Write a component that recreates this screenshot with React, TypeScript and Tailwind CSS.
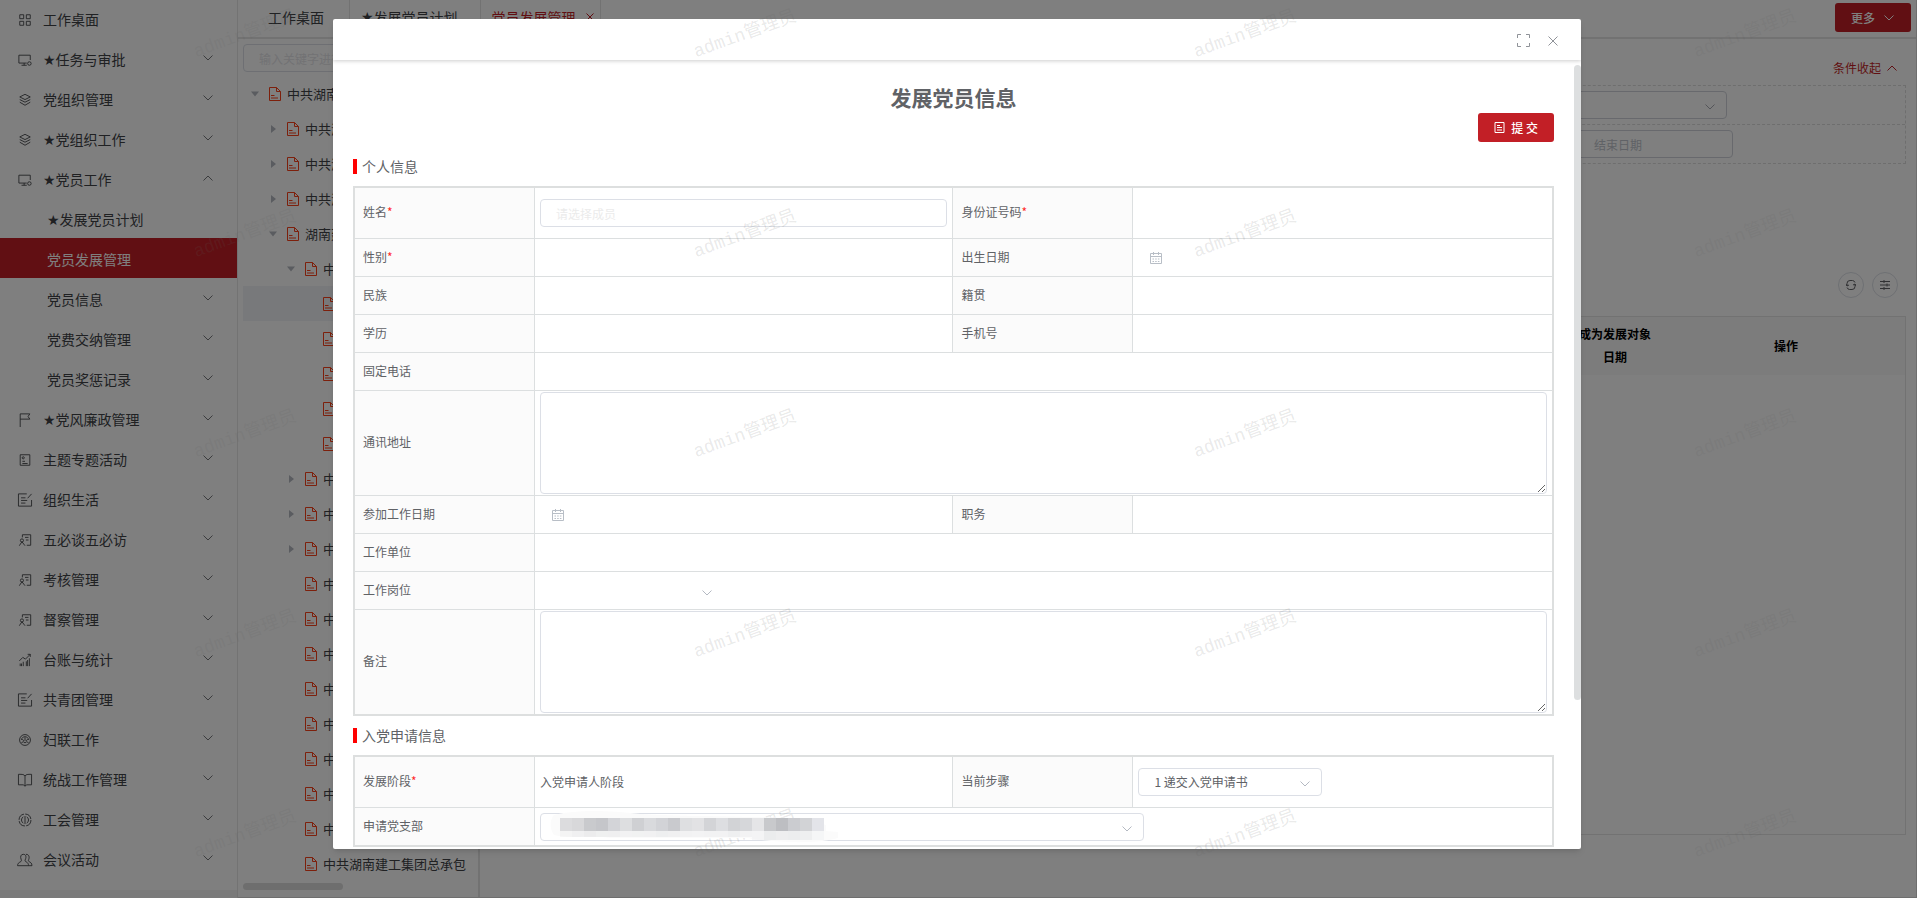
import { useState, type ReactNode } from 'react'
import clsx from 'clsx'

type IconName =
  | 'grid'
  | 'monitor'
  | 'layers'
  | 'flag'
  | 'profile'
  | 'edit'
  | 'person'
  | 'chart'
  | 'face'
  | 'book'
  | 'union'
  | 'users'

interface MenuItem {
  label: string
  icon?: IconName
  star?: boolean
  arrow?: 'up' | 'down'
  active?: boolean
}

interface TreeRow {
  label: string
  level: number
  arrow?: 'open' | 'closed'
  current?: boolean
}

const menu: MenuItem[] = [
  { label: '工作桌面', icon: 'grid' },
  { label: '任务与审批', star: true, icon: 'monitor', arrow: 'down' },
  { label: '党组织管理', icon: 'layers', arrow: 'down' },
  { label: '党组织工作', star: true, icon: 'layers', arrow: 'down' },
  { label: '党员工作', star: true, icon: 'monitor', arrow: 'up' },
  { label: '发展党员计划', star: true },
  { label: '党员发展管理', active: true },
  { label: '党员信息', arrow: 'down' },
  { label: '党费交纳管理', arrow: 'down' },
  { label: '党员奖惩记录', arrow: 'down' },
  { label: '党风廉政管理', star: true, icon: 'flag', arrow: 'down' },
  { label: '主题专题活动', icon: 'profile', arrow: 'down' },
  { label: '组织生活', icon: 'edit', arrow: 'down' },
  { label: '五必谈五必访', icon: 'person', arrow: 'down' },
  { label: '考核管理', icon: 'person', arrow: 'down' },
  { label: '督察管理', icon: 'person', arrow: 'down' },
  { label: '台账与统计', icon: 'chart', arrow: 'down' },
  { label: '共青团管理', icon: 'edit', arrow: 'down' },
  { label: '妇联工作', icon: 'face', arrow: 'down' },
  { label: '统战工作管理', icon: 'book', arrow: 'down' },
  { label: '工会管理', icon: 'union', arrow: 'down' },
  { label: '会议活动', icon: 'users', arrow: 'down' },
]

const tree: TreeRow[] = [
  { label: '中共湖南', level: 0, arrow: 'open' },
  { label: '中共湖', level: 1, arrow: 'closed' },
  { label: '中共湖', level: 1, arrow: 'closed' },
  { label: '中共湖', level: 1, arrow: 'closed' },
  { label: '湖南建', level: 1, arrow: 'open' },
  { label: '中共', level: 2, arrow: 'open' },
  { label: '', level: 3, current: true },
  ...Array.from({ length: 4 }, () => ({ label: '', level: 3 })),
  ...Array.from({ length: 3 }, () => ({ label: '中共', level: 2, arrow: 'closed' as const })),
  ...Array.from({ length: 8 }, () => ({ label: '中共', level: 2 })),
  { label: '中共湖南建工集团总承包', level: 2 },
]

const treeIndent = ['pl-[8px]', 'pl-[26px]', 'pl-[44px]', 'pl-[62px]']

const iconPaths: Record<IconName, ReactNode> = {
  grid: (
    <path d="M2 2h4.5v4.5H2zM9.5 2H14v4.5H9.5zM2 9.5h4.5V14H2zM9.5 9.5H14V14H9.5z" />
  ),
  monitor: (
    <>
      <path d="M10 11.500H1v-9h13V8M7 11.500V14M4 14h6" />
      <circle cx="13" cy="12" r="2" />
    </>
  ),
  layers: <path d="M8 1.500l6 3-6 3-6-3zM2 7.500l6 3 6-3M2 10.500l6 3.500 6-3.500" />,
  flag: <path d="M2.500 16V1h11l-2 3 2 3h-11" />,
  profile: (
    <>
      <path d="M2.500 2h11v12h-11zM5 9.500h3M5 12h6" />
      <circle cx="6" cy="5.500" r="1.200" />
    </>
  ),
  edit: <path d="M10 1H.5v14h15V8M15.500 1l-4.500 5M3.500 5.500h5M3.500 8.500h7M3.500 11.500h5" />,
  person: (
    <>
      <path d="M5 5V2h9.500v12H10M8 5h4M9 8h3M1.500 14.500l3-4.500 3.500 4.500" />
      <circle cx="4.500" cy="8.500" r="1.800" />
    </>
  ),
  chart: <path d="M2.500 15v-3M6 15v-5M9.500 15V9.500M13 15V6M4 15v-3M11 15V8M1.500 9l4-4 3 2L14 1.500M11 1.500h3v3" />,
  face: (
    <>
      <circle cx="8" cy="8" r="6.200" />
      <path d="M4 8c0-5 8-5 8 0M5 7l1.500 2M11 7L9.500 9M4 11.500c1-2 3-2 4 0 1-2 3-2 4 0M8 5v4" />
    </>
  ),
  book: <path d="M8 3.500C7 1.500 5 1.500.5 1.500v12h5.500l2 1.500 2-1.500h5.500v-12c-4.500 0-6.500 0-7.500 2V15" />,
  union: (
    <>
      <circle cx="8" cy="8" r="6.800" strokeDasharray="9 1.500" />
      <path d="M8 3.500v9M6 4.500a4 4 0 0 0 0 7M10 4.500a4 4 0 0 1 0 7" />
    </>
  ),
  users: (
    <path d="M6 1.500c-3 0-3.500 3-2.500 5.500.8 2 .5 2.500-1 3.200C1 11 -.5 12 -.5 14.500h12.500M6 1.500c3.500 0 3.500 3.500 2.500 5.500-.8 2-.5 2.500 1 3.200 1.500.8 2.500 2 2.500 4.300h4c0-3-2-4-3-4.500s-1.500-1-.8-2.500c1-2.500.8-6-3.200-6" />
  ),
}

function MenuIcon({ name }: { name: IconName }) {
  return (
    <svg viewBox="0 0 16 16" className="mt-0.5 h-[14px] w-[14px] shrink-0 overflow-visible" fill="none" stroke="currentColor">
      {iconPaths[name]}
    </svg>
  )
}

function Star() {
  return <span className="font-['DejaVu_Sans'] leading-none">★</span>
}

function Chevron({ up, className }: { up?: boolean; className?: string }) {
  return (
    <svg viewBox="0 0 10 6" className={clsx('h-[6px] w-[10px] shrink-0', className)} fill="none" stroke="currentColor">
      <path d={up ? 'M.5 5.500L5 1l4.500 4.500' : 'M.5.5L5 5 9.500.5'} />
    </svg>
  )
}

function CalendarIcon({ className }: { className?: string }) {
  return (
    <svg viewBox="0 0 12 12" className={clsx('h-[12px] w-[12px]', className)} fill="none" stroke="currentColor">
      <path d="M.5 1.500h11v10H.5zM.5 4.500h11M3.500 0v3M8.500 0v3" />
      <path d="M2.500 7h7M2.500 9.500h7" strokeDasharray="1.500 1.200" />
    </svg>
  )
}

function DocIcon() {
  return (
    <svg viewBox="0 0 12 14" className="h-[14px] w-[12px] shrink-0 text-[#fa4018]" fill="none" stroke="currentColor">
      <path d="M7.500.5H.5v13h11v-9l-4-4v4h4M2 8.500h3.500M2 11h7" />
    </svg>
  )
}

function Sidebar() {
  return (
    <aside className="w-[238px] shrink-0 border-r border-[#e6e6e6] bg-[#f5f5f5]">
      <nav className="-mt-0.5 bg-white pb-3">
        {menu.map((item) => (
          <a
            key={item.label}
            href="#"
            className={clsx(
              'flex h-10 items-center pt-0.5 pr-6 text-sm',
              item.icon ? 'gap-[11px] pl-[18px]' : 'pl-[47px]',
              item.active ? 'bg-[#c21f26] text-white' : 'text-[#404246]'
            )}
          >
            {item.icon && <MenuIcon name={item.icon} />}
            <span className="flex-1">
              {item.star && <Star />}
              {item.label}
            </span>
            {item.arrow && <Chevron up={item.arrow === 'up'} className="-mt-0.5 text-[#77797d]" />}
          </a>
        ))}
      </nav>
    </aside>
  )
}

function TabBar() {
  return (
    <header className="flex h-[39px] shrink-0 items-center justify-between border-b-2 border-[#e4e4e4] pr-[5px] text-sm text-[#404246]">
      <div className="flex h-full">
        <a href="#" className="flex items-center border-r border-[#e4e4e4] pr-[25px] pb-[3px] pl-[30px]">工作桌面</a>
        <a href="#" className="flex items-center border-r border-[#e4e4e4] pr-[22px] pb-[3px] pl-[11px]">
          <Star />
          发展党员计划
        </a>
        <a href="#" className="flex items-center gap-2.5 border-r border-[#e4e4e4] pr-1.5 pb-[3px] pl-[11px] text-[#c21f26]">
          党员发展管理
          <svg viewBox="0 0 8 8" className="h-2 w-2" stroke="currentColor"><path d="M.5.5l7 7M7.500.5l-7 7" /></svg>
        </a>
      </div>
      <button className="mb-0.5 flex h-[29px] items-center gap-[9px] rounded-[3px] bg-[#c21f26] pr-[17px] pl-4 text-xs font-medium text-white">
        更多
        <Chevron />
      </button>
    </header>
  )
}

function OrgTree() {
  return (
    <section className="flex w-[242px] shrink-0 flex-col border-r-2 border-[#e4e4e4] px-[5px] pt-[5px]">
      <input
        aria-label="关键字"
        placeholder="输入关键字进行过滤"
        className="h-7 w-full shrink-0 rounded border border-[#dcdfe6] px-[15px] text-xs placeholder:text-[#e4e4e8]"
      />
      <ul className="mt-1 mb-0.5">
        {tree.map((row, index) => (
          <li
            key={index}
            className={clsx(
              'flex h-[35px] items-center text-[13px] whitespace-nowrap text-[#404246]',
              treeIndent[row.level],
              row.current && 'bg-[#f0f3f6]'
            )}
          >
            <svg viewBox="0 0 8 8" className="mr-2.5 h-2 w-2 shrink-0 text-[#b4b8c0]" fill="currentColor">
              {row.arrow === 'open' && <path d="M0 1.500h8L4 6.500z" />}
              {row.arrow === 'closed' && <path d="M2 0v8l5-4z" />}
            </svg>
            <DocIcon />
            <span className="pl-1.5">{row.label}</span>
          </li>
        ))}
      </ul>
      <div className="h-[7px] w-[100px] rounded-full bg-[#dcdcdc]" />
    </section>
  )
}

function FilterAndTable() {
  return (
    <section className="flex min-w-0 flex-1 flex-col pr-[10px] pl-3">
      <div className="flex h-[46px] items-center justify-end pt-[11px] pr-[9px] text-xs text-[#c21f26]">
        <button className="flex items-center gap-1.5">
          条件收起
          <Chevron up />
        </button>
      </div>
      <form className="border border-dashed border-[#dcdcdc]">
        <div className="flex h-[39px] items-center justify-end border-b border-dashed border-[#dcdcdc] pr-[178px]">
          <div className="relative w-60">
            <select aria-label="发展阶段筛选" className="block h-7 w-full appearance-none rounded border border-[#d0d3da] text-xs" />
            <Chevron className="pointer-events-none absolute top-[13px] right-3 text-[#a8abb2]" />
          </div>
        </div>
        <div className="flex h-[38px] items-center justify-end pr-[172px]">
          <input
            aria-label="结束日期"
            placeholder="结束日期"
            className="h-7 w-[340px] rounded border border-[#d0d3da] pl-[200px] text-xs placeholder:text-[#c0c4cc]"
          />
        </div>
      </form>
      <div className="flex h-[152px] items-end justify-end gap-2 pr-2 pb-[18px]">
        <button aria-label="刷新" className="flex h-[26px] w-[26px] items-center justify-center rounded-full border border-[#dcdfe6] text-[#606266]">
          <svg viewBox="0 0 10 10" className="h-2.5 w-2.5" fill="none" stroke="currentColor">
            <path d="M1 6V3.500a3 3 0 0 1 3-3h2.500a3 3 0 0 1 2.500 2M9 4v2.500a3 3 0 0 1-3 3H3.500A3 3 0 0 1 1 7.500M0 4l1 2 2-1M10 6L9 4 7 5" />
          </svg>
        </button>
        <button aria-label="列设置" className="flex h-[26px] w-[26px] items-center justify-center rounded-full border border-[#dcdfe6] text-[#606266]">
          <svg viewBox="0 0 10 10" className="h-2.5 w-2.5" fill="none" stroke="currentColor">
            <path d="M0 1.500h10M0 5h10M0 8.500h10M4 0v3M7 3.500v3M4 7v3" />
          </svg>
        </button>
      </div>
      <div className="mb-[62px] flex-1 border border-[#e4e4e4]">
        <table className="w-full table-fixed text-xs text-black">
          <thead className="bg-[#f8f8f9]">
            <tr className="h-[58px]">
              <th />
              <th className="w-[104px] px-4 pb-0.5 leading-[23px] font-bold">成为发展对象日期</th>
              <th className="w-[238px] font-bold">操作</th>
            </tr>
          </thead>
        </table>
      </div>
    </section>
  )
}

const controlClass = 'block h-7 w-full rounded border bg-transparent text-xs text-[#606266]'

function LabelCell({ id, required, children }: { id: string; required?: boolean; children: string }) {
  return (
    <th scope="row" className="border-r border-b border-[#dcdfe0] bg-[#fbfbfb] px-2 pb-0.5 text-left font-normal">
      <label htmlFor={id}>
        {children}
        {required && <span className="text-[#ff2a2a]">*</span>}
      </label>
    </th>
  )
}

function ValueCell({ wide, last, children }: { wide?: boolean; last?: boolean; children: ReactNode }) {
  return (
    <td
      colSpan={wide ? 3 : 1}
      className={clsx('border-b border-[#dcdfe0] px-[5px] py-px', !wide && !last && 'border-r')}
    >
      {children}
    </td>
  )
}

function PlainInput({ id }: { id: string }) {
  return <input id={id} className={clsx(controlClass, 'border-transparent px-[15px]')} />
}

function DateInput({ id }: { id: string }) {
  return (
    <div className="relative">
      <input id={id} className={clsx(controlClass, 'border-transparent pl-8')} />
      <CalendarIcon className="pointer-events-none absolute top-2 left-3 text-[#b8bec6]" />
    </div>
  )
}

function Select({ id, className, border, options }: { id: string; className: string; border?: boolean; options: string[] }) {
  return (
    <div className={clsx('relative', className)}>
      <select id={id} className={clsx(controlClass, 'appearance-none px-[15px]', border ? 'border-[#dcdfe6]' : 'border-transparent')}>
        {options.map((option) => (
          <option key={option}>{option}</option>
        ))}
      </select>
      <Chevron className="pointer-events-none absolute top-[13px] right-3 text-[#b4b9c2]" />
    </div>
  )
}

function FormTable({ children }: { children: ReactNode }) {
  return (
    <div className="border-2 border-[#dddfdf]">
      <table className="w-full table-fixed border-separate border-spacing-0 text-xs [&_tr:last-child>*]:border-b-0">
        <colgroup>
          <col className="w-[180px]" />
          <col />
          <col className="w-[180px]" />
          <col />
        </colgroup>
        <tbody>{children}</tbody>
      </table>
    </div>
  )
}

function SectionTitle({ children }: { children: string }) {
  return (
    <h3 className="flex h-[39px] items-center gap-[5px] text-sm">
      <span className="h-[15px] w-1 bg-[#ff0000]" />
      <span className="pb-0.5">{children}</span>
    </h3>
  )
}

const mosaic = [
  '#dcdcde', '#d8d8da', '#c9cacd', '#c5c6ca', '#d3d4d8', '#dddee0', '#cfd0d3', '#d9dadd', '#d2d3d7', '#c9cace', '#dedfe1',
  '#e2e2e4', '#d3d4d7', '#dddee1', '#d2d3d6', '#d6d7da', '#e5e5e7', '#c8c9cc', '#bdbec2', '#cbccd0', '#d2d3d6', '#e3e4e9',
]

function MaskedName() {
  return (
    <svg viewBox="0 0 290 34" className="pointer-events-none absolute -top-1 left-2.5 z-20 h-[34px] w-[290px]">
      <path d="M4 6C30 0 60 2 90 5c50 3 120 2 170 5l16 6v6l12 1v6c-20 6-60 5-90 0H60C40 26 20 30 4 26-1 20 0 10 4 6z" fill="#fbfbfb" />
      {mosaic.map((fill, i) => (
        <g key={i} fill={fill}>
          <rect x={10 + i * 12} y="9" width="12" height="13" />
          <rect x={10 + i * 12} y="22" width="12" height={i > 15 ? 9 : 6} opacity={i % 3 === 0 ? 0.2 : 0.3} />
        </g>
      ))}
    </svg>
  )
}

function MemberDialog({ onClose }: { onClose: () => void }) {
  return (
    <div role="dialog" aria-label="发展党员信息" className="flex w-[65.2%] flex-col overflow-hidden rounded-[2px] bg-white shadow-md">
      <div className="relative flex h-[41px] shrink-0 items-center justify-end gap-[18px] pt-0.5 pr-[23px] text-[#909399] shadow-[0_1px_4px_rgba(0,0,0,0.2)]">
        <button aria-label="全屏">
          <svg viewBox="0 0 13 13" className="h-[13px] w-[13px]" fill="none" stroke="currentColor">
            <path d="M.5 4V.5H4M9 .5h3.500V4M12.500 9v3.500H9M4 12.500H.5V9" />
          </svg>
        </button>
        <button aria-label="关闭" onClick={onClose}>
          <svg viewBox="0 0 10 10" className="h-2.5 w-2.5" stroke="currentColor">
            <path d="M.5.5l9 9M9.500.5l-9 9" />
          </svg>
        </button>
      </div>
      <div className="flex min-h-0 flex-1 overflow-hidden">
        <form className="min-w-0 flex-1 px-5 pt-[23px] text-[#606266]">
          <h2 className="pb-px text-center text-[21px] leading-[29px] font-bold">发展党员信息</h2>
          <div className="flex justify-end">
            <button type="button" className="flex h-[29px] items-center gap-1.5 rounded-[3px] bg-[#c21f26] px-4 text-xs font-medium text-white">
              <svg viewBox="0 0 11 11" className="h-[11px] w-[11px]" fill="none" stroke="currentColor">
                <path d="M1 .5h9v10H1zM3 3.500h3M3 5.500h5M3 8h5" />
              </svg>
              提 交
            </button>
          </div>
          <div className="mt-[5px]">
            <SectionTitle>个人信息</SectionTitle>
          </div>
          <FormTable>
            <tr className="h-[51px]">
              <LabelCell id="name" required>姓名</LabelCell>
              <ValueCell>
                <input id="name" placeholder="请选择成员" className={clsx(controlClass, 'border-[#dcdfe6] px-[15px] placeholder:text-[#ebebeb]')} />
              </ValueCell>
              <LabelCell id="idcard" required>身份证号码</LabelCell>
              <ValueCell last><PlainInput id="idcard" /></ValueCell>
            </tr>
            <tr className="h-[38px]">
              <LabelCell id="gender" required>性别</LabelCell>
              <ValueCell><PlainInput id="gender" /></ValueCell>
              <LabelCell id="birthday">出生日期</LabelCell>
              <ValueCell last><DateInput id="birthday" /></ValueCell>
            </tr>
            <tr className="h-[38px]">
              <LabelCell id="nation">民族</LabelCell>
              <ValueCell><PlainInput id="nation" /></ValueCell>
              <LabelCell id="origin">籍贯</LabelCell>
              <ValueCell last><PlainInput id="origin" /></ValueCell>
            </tr>
            <tr className="h-[38px]">
              <LabelCell id="education">学历</LabelCell>
              <ValueCell><PlainInput id="education" /></ValueCell>
              <LabelCell id="mobile">手机号</LabelCell>
              <ValueCell last><PlainInput id="mobile" /></ValueCell>
            </tr>
            <tr className="h-[38px]">
              <LabelCell id="phone">固定电话</LabelCell>
              <ValueCell wide><PlainInput id="phone" /></ValueCell>
            </tr>
            <tr>
              <LabelCell id="address">通讯地址</LabelCell>
              <ValueCell wide>
                <textarea id="address" className="block h-[102px] w-full resize-y rounded border border-[#dcdfe6] px-[15px] py-1" />
              </ValueCell>
            </tr>
            <tr className="h-[38px]">
              <LabelCell id="workdate">参加工作日期</LabelCell>
              <ValueCell><DateInput id="workdate" /></ValueCell>
              <LabelCell id="duty">职务</LabelCell>
              <ValueCell last><PlainInput id="duty" /></ValueCell>
            </tr>
            <tr className="h-[38px]">
              <LabelCell id="company">工作单位</LabelCell>
              <ValueCell wide><PlainInput id="company" /></ValueCell>
            </tr>
            <tr className="h-[38px]">
              <LabelCell id="post">工作岗位</LabelCell>
              <ValueCell wide><Select id="post" className="w-[184px]" options={[]} /></ValueCell>
            </tr>
            <tr>
              <LabelCell id="remark">备注</LabelCell>
              <ValueCell wide>
                <textarea id="remark" className="block h-[102px] w-full resize-y rounded border border-[#dcdfe6] px-[15px] py-1" />
              </ValueCell>
            </tr>
          </FormTable>

          <SectionTitle>入党申请信息</SectionTitle>
          <FormTable>
            <tr className="h-[51px]">
              <LabelCell id="stage" required>发展阶段</LabelCell>
              <ValueCell><output id="stage">入党申请人阶段</output></ValueCell>
              <LabelCell id="step">当前步骤</LabelCell>
              <ValueCell last>
                <Select id="step" border className="w-[184px]" options={['1 递交入党申请书']} />
              </ValueCell>
            </tr>
            <tr className="h-[37px]">
              <LabelCell id="branch">申请党支部</LabelCell>
              <ValueCell wide>
                <div className="relative w-3/5">
                  <Select id="branch" border className="w-full" options={[]} />
                  <MaskedName />
                </div>
              </ValueCell>
            </tr>
          </FormTable>
        </form>
        <div className="w-[7px] pt-[5px]">
          <div className="h-[81%] rounded-full bg-[#dddfe0]" />
        </div>
      </div>
    </div>
  )
}

function Watermark() {
  return (
    <div aria-hidden="true" className="pointer-events-none absolute inset-0 z-10 grid auto-rows-[200px] grid-cols-[repeat(4,500px)] overflow-hidden">
      {Array.from({ length: 20 }, (_, i) => (
        <div key={i} className="pt-5 pl-[190px]">
          <span className="flex h-7 w-[110px] -rotate-20 items-center justify-center font-['Liberation_Mono','Noto_Sans_CJK_SC',monospace] text-lg whitespace-nowrap text-[#606060]/15">
            admin管理员
          </span>
        </div>
      ))}
    </div>
  )
}

export default function App() {
  const [open, setOpen] = useState(true)

  return (
    <div className="relative flex h-screen overflow-hidden bg-white font-['Noto_Sans_CJK_SC',sans-serif]">
      <Sidebar />
      <main className="flex min-w-0 flex-1 flex-col border-r border-b border-[#dcdcdc]">
        <TabBar />
        <div className="flex min-h-0 flex-1">
          <OrgTree />
          <FilterAndTable />
        </div>
      </main>

      {open && (
        <div className="absolute inset-0 flex justify-center bg-black/50 pt-[19px] pr-[3px] pb-[49px]">
          <MemberDialog onClose={() => setOpen(false)} />
        </div>
      )}
      <Watermark />
    </div>
  )
}
